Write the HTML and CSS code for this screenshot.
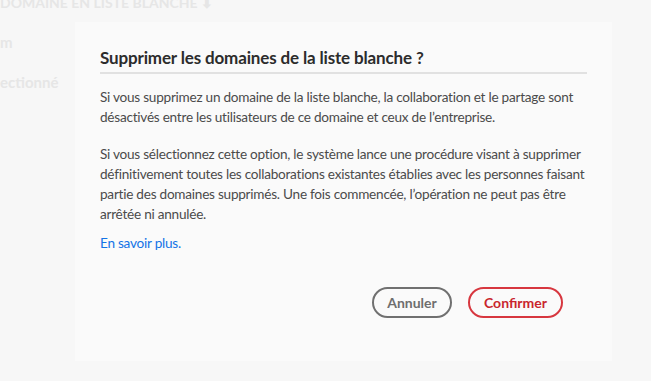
FILE: index.html
```html
<!doctype html>
<html lang="fr">
    <head>
        <meta charset="UTF-8" />
        <meta name="viewport" content="width=device-width, initial-scale=1.0" />
        <title>Supprimer les domaines</title>
        <link rel="stylesheet" href="styles.css">
    </head>
    <body>
        <div class="page">
            <div class="page-head">DOMAINE EN LISTE BLANCHE &#11015;</div>
            <div class="page-row">m</div>
            <div class="page-row">ectionné</div>
        </div>

        <div class="overlay">
            <div class="dialog">
                <h2 class="dialog-title">Supprimer les domaines de la liste blanche ?</h2>
                <div class="dialog-body">
                    <p>
                        Si vous supprimez un domaine de la liste blanche, la collaboration et le partage sont
                        désactivés entre les utilisateurs de ce domaine et ceux de l’entreprise.
                    </p>
                    <p>
                        Si vous sélectionnez cette option, le système lance une procédure visant à supprimer
                        définitivement toutes les collaborations existantes établies avec les personnes faisant
                        partie des domaines supprimés. Une fois commencée, l’opération ne peut pas être
                        arrêtée ni annulée.
                    </p>
                    <p><a href="#" class="link">En savoir plus.</a></p>
                </div>
                <div class="dialog-actions">
                    <button class="btn btn-secondary">Annuler</button>
                    <button class="btn btn-warning">Confirmer</button>
                </div>
            </div>
        </div>
    </body>
</html>
```

FILE: styles.css
```css
body {
    margin: 0;
    font-family: Lato, "Open Sans", sans-serif;
    color: #4b4b4b;
    background-color: #f7f7f7;
    height: 381px;
    overflow: hidden;
}
.page {
    color: #e6e6e6;
    font-weight: bold;
    font-size: 15px;
}
.page-head {
    margin-top: -6px;
    font-size: 14px;
}
.page-row {
    margin-top: 22px;
    font-size: 15px;
}
.overlay {
    position: absolute;
    left: 0;
    top: 0;
    width: 100%;
    height: 100%;
}
.dialog {
    position: absolute;
    left: 75px;
    top: 22px;
    width: 487px;
    padding: 25px 25px 43px 25px;
    background-color: #fafafa;
}
.dialog-title {
    margin: 0;
    padding-bottom: 4px;
    font-size: 17px;
    letter-spacing: -0.15px;
    font-weight: bold;
    color: #2c2c2c;
    border-bottom: 2px solid #e1e1e1;
}
.dialog-body {
    padding-top: 13px;
    font-size: 13.6px;
    letter-spacing: -0.25px;
    line-height: 20px;
}
.dialog-body p {
    margin: 0 0 17px 0;
}
.dialog-body p:nth-child(2) {
    margin-bottom: 9px;
}
.link {
    color: #1473e6;
    text-decoration: none;
}
.dialog-actions {
    display: flex;
    justify-content: flex-end;
    gap: 16px;
    padding-right: 24px;
    margin-top: 34px;
}
.btn {
    height: 31px;
    padding: 0 12px;
    border-radius: 16px;
    background: transparent;
    font-family: Lato, "Open Sans", sans-serif;
    font-size: 14px;
    font-weight: bold;
}
.btn-secondary {
    min-width: 80px;
    border: 2px solid #707070;
    color: #6e6e6e;
}
.btn-warning {
    min-width: 95px;
    border: 2px solid #d7373f;
    color: #c9252d;
}
```
